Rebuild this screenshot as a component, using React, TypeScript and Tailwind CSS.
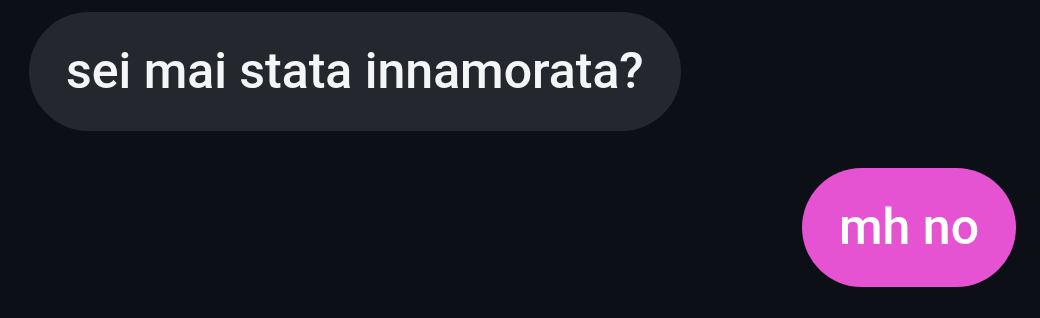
export default function App() {
  return (
    <div
      className="flex h-[318px] w-[1040px] flex-col bg-[#0c1016] pl-[29px] pr-[24px] pt-[12px]"
      style={{ fontFamily: "Roboto, 'Noto Sans', sans-serif" }}
    >
      <div className="flex justify-start">
        <div className="flex h-[119px] items-center rounded-full bg-[#24282e] px-[37px] text-[50px] font-medium text-[#f4f5f7]">
          sei mai stata innamorata?
        </div>
      </div>
      <div className="mt-[37px] flex justify-end">
        <div className="flex h-[119px] items-center rounded-full bg-[#e553d3] px-[37px] text-[50px] font-medium text-white">
          mh no
        </div>
      </div>
    </div>
  );
}
